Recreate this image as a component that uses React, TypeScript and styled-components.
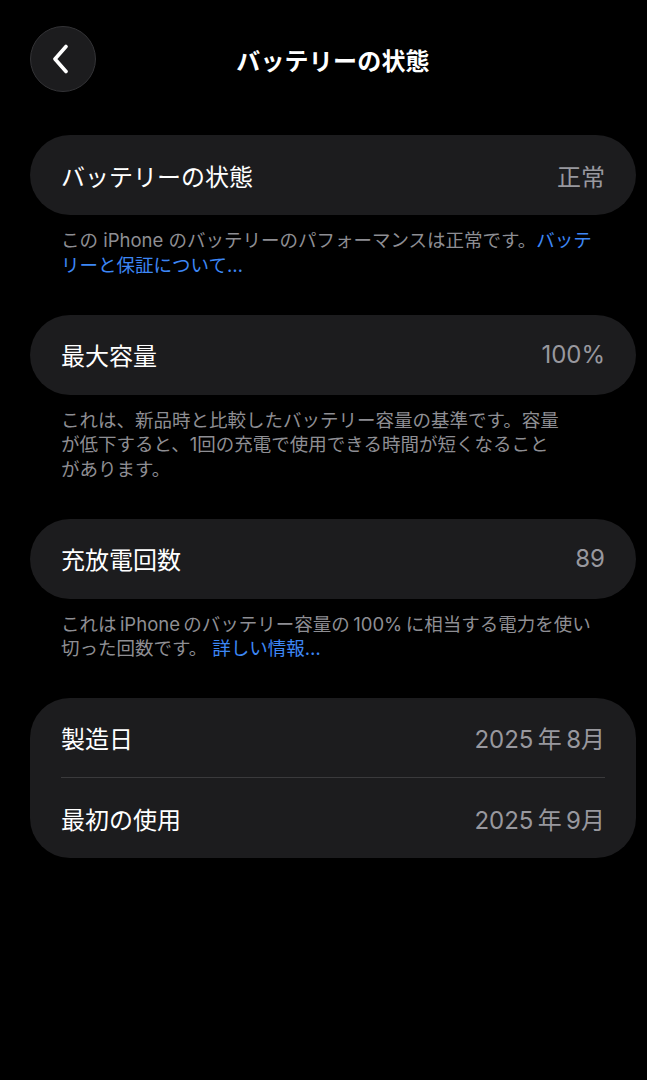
import styled, { createGlobalStyle } from 'styled-components';

const GlobalStyle = createGlobalStyle`
  html, body {
    margin: 0;
    padding: 0;
    background: #000;
  }
  body {
    font-family: 'Inter', 'Noto Sans CJK JP', sans-serif;
    -webkit-font-smoothing: antialiased;
  }
`;

const Page = styled.div`
  min-height: 1080px;
  background: #000;
  padding: 26px 11px 0 30px;
  box-sizing: border-box;
  display: flex;
  flex-direction: column;
`;

// 上部のナビゲーション（戻るボタンとタイトル）
const NavBar = styled.div`
  position: relative;
  height: 66px;
  display: flex;
  align-items: center;
  justify-content: center;
  margin-bottom: 43px;
`;

const BackButton = styled.button`
  position: absolute;
  left: 0;
  top: 0;
  width: 66px;
  height: 66px;
  border-radius: 50%;
  background: #1c1c1e;
  border: 1px solid #333336;
  box-sizing: border-box;
  display: flex;
  align-items: center;
  justify-content: center;
  padding: 0 4px 0 0;
  cursor: pointer;
`;

const Title = styled.h1`
  margin: 0;
  color: #fff;
  font-size: 24px;
  font-weight: 700;
  letter-spacing: 0.2px;
`;

const Section = styled.section`
  display: flex;
  flex-direction: column;
  margin-bottom: 37.5px;
`;

const Card = styled.div`
  background: #1c1c1e;
  border-radius: 40px;
  padding: 0 31px;
  display: flex;
  flex-direction: column;
`;

const Row = styled.div<{ $divider?: boolean }>`
  height: 80px;
  display: flex;
  align-items: center;
  justify-content: space-between;
  border-bottom: ${(p) => (p.$divider ? '1px solid #3a3a3c' : 'none')};
  box-sizing: border-box;
`;

const Label = styled.span`
  color: #fff;
  font-size: 24px;
  font-weight: 400;
`;

const Value = styled.span`
  color: #98989e;
  font-size: 24px;
  font-weight: 400;
`;

const Note = styled.p`
  margin: 13px 0 0;
  padding: 0 31px;
  color: #8e8e93;
  font-size: 18.5px;
  line-height: 24.5px;
  white-space: nowrap;
`;

const Link = styled.a`
  color: #3d87f5;
  text-decoration: none;
`;

function ChevronLeft() {
  return (
    <svg width="20" height="30" viewBox="0 0 20 30" fill="none">
      <path
        d="M15 2.5 L4 15 L15 27.5"
        stroke="#fff"
        strokeWidth="3.6"
        strokeLinecap="round"
        strokeLinejoin="round"
      />
    </svg>
  );
}

export default function App() {
  return (
    <>
      <GlobalStyle />
      <Page>
        <NavBar>
          <BackButton aria-label="戻る">
            <ChevronLeft />
          </BackButton>
          <Title>バッテリーの状態</Title>
        </NavBar>

        <Section>
          <Card>
            <Row>
              <Label>バッテリーの状態</Label>
              <Value>正常</Value>
            </Row>
          </Card>
          <Note>
            この iPhone のバッテリーのパフォーマンスは正常です。<Link>バッテ</Link>
            <br />
            <Link>リーと保証について…</Link>
          </Note>
        </Section>

        <Section>
          <Card>
            <Row>
              <Label>最大容量</Label>
              <Value>100%</Value>
            </Row>
          </Card>
          <Note>
            これは、新品時と比較したバッテリー容量の基準です。容量
            <br />
            が低下すると、1回の充電で使用できる時間が短くなること
            <br />
            があります。
          </Note>
        </Section>

        <Section>
          <Card>
            <Row>
              <Label>充放電回数</Label>
              <Value>89</Value>
            </Row>
          </Card>
          <Note>
            これは{'\u2009'}iPhone{'\u2009'}のバッテリー容量の{'\u2009'}100%{'\u2009'}に相当する電力を使い
            <br />
            切った回数です。 <Link>詳しい情報…</Link>
          </Note>
        </Section>

        <Section>
          <Card>
            <Row $divider>
              <Label>製造日</Label>
              <Value>2025{'\u2009'}年{'\u2009'}8月</Value>
            </Row>
            <Row>
              <Label>最初の使用</Label>
              <Value>2025{'\u2009'}年{'\u2009'}9月</Value>
            </Row>
          </Card>
        </Section>
      </Page>
    </>
  );
}
